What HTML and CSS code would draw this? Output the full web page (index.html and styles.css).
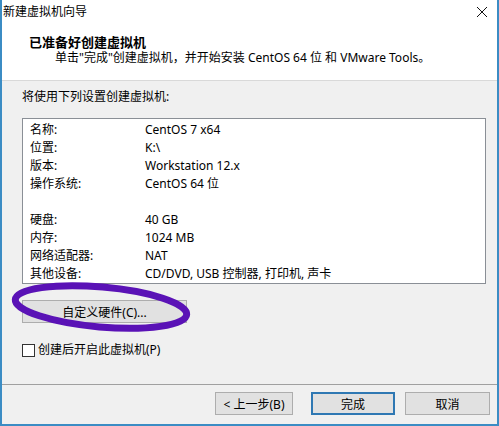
FILE: index.html
```html
<!DOCTYPE html>
<html lang="zh-CN">
<head>
    <meta charset="UTF-8">
    <title>新建虚拟机向导</title>
    <link rel="stylesheet" href="styles.css">
</head>
<body>
    <div class="window">
        <div class="titlebar">
            <span class="title">新建虚拟机向导</span>
            <svg class="close" width="12" height="12" viewBox="0 0 12 12">
                <path d="M1 1 L11 11 M11 1 L1 11" stroke="#111" stroke-width="1" fill="none"/>
            </svg>
        </div>
        <div class="header">
            <div class="heading">已准备好创建虚拟机</div>
            <div class="subtitle">单击"完成"创建虚拟机，并开始安装 CentOS 64 位 和 VMware Tools。</div>
        </div>

        <div class="content">
            <div class="intro">将使用下列设置创建虚拟机:</div>
            <div class="summary">
                <div class="row"><span class="key">名称:</span><span>CentOS 7 x64</span></div>
                <div class="row"><span class="key">位置:</span><span>K:\</span></div>
                <div class="row"><span class="key">版本:</span><span>Workstation 12.x</span></div>
                <div class="row"><span class="key">操作系统:</span><span>CentOS 64 位</span></div>
                <div class="row"></div>
                <div class="row"><span class="key">硬盘:</span><span>40 GB</span></div>
                <div class="row"><span class="key">内存:</span><span>1024 MB</span></div>
                <div class="row"><span class="key">网络适配器:</span><span>NAT</span></div>
                <div class="row"><span class="key">其他设备:</span><span>CD/DVD, USB 控制器, 打印机, 声卡</span></div>
            </div>
            <button class="btn custom">自定义硬件(C)...</button>
            <label class="check">
                <span class="box"></span>
                <span>创建后开启此虚拟机(P)</span>
            </label>
        </div>

        <div class="footer">
            <button class="btn back">&lt; 上一步(B)</button>
            <button class="btn finish">完成</button>
            <button class="btn cancel">取消</button>
        </div>

        <!-- 手绘的紫色圈 -->
        <svg class="mark" width="499" height="426" viewBox="0 0 499 426">
            <ellipse cx="101" cy="307" rx="86" ry="20" transform="rotate(5 101 307)"
                     fill="none" stroke="#5a12b6" stroke-width="7"/>
        </svg>
    </div>
</body>
</html>
```

FILE: styles.css
```css
* {
    margin: 0;
    padding: 0;
    box-sizing: border-box;
}

body {
    width: 499px;
    height: 426px;
    overflow: hidden;
    font-family: "Noto Sans", "Noto Sans CJK SC", sans-serif;
    font-size: 12px;
    color: #000;
    background: #f0f0f0;
}

.window {
    position: relative;
    width: 499px;
    height: 426px;
    background: #f0f0f0;
    border-left: 2px solid #3b8cc4;
    border-right: 2px solid #3b8cc4;
    border-bottom: 2px solid #3b8cc4;
    display: flex;
    flex-direction: column;
}

.titlebar {
    height: 24px;
    background: #fff;
    display: flex;
    align-items: center;
    justify-content: space-between;
    padding: 0 9px 0 1px;
}

.title {
    font-size: 12px;
    line-height: 16px;
}

.header {
    height: 57px;
    background: #fff;
    border-bottom: 1px solid #d9d9d9;
    padding: 10px 0 0 27px;
}

.heading {
    font-size: 13px;
    font-weight: bold;
    line-height: 16px;
}

.subtitle {
    line-height: 16px;
    padding-left: 26px;
}

.content {
    padding: 8px 11px 0 20px;
    display: flex;
    flex-direction: column;
    align-items: flex-start;
}

.intro {
    line-height: 16px;
}

.summary {
    margin-top: 13px;
    width: 464px;
    height: 166px;
    background: #fff;
    border: 1px solid #8a8f96;
    padding: 2px 0 0 7px;
}

.row {
    display: flex;
    height: 18px;
    line-height: 18px;
}

.key {
    width: 115px;
}

.btn {
    font-family: "Noto Sans", "Noto Sans CJK SC", sans-serif;
    font-size: 12px;
    height: 23px;
    background: #e1e1e1;
    border: 1px solid #adadad;
    color: #000;
}

.custom {
    margin-top: 16px;
    width: 165px;
}

.check {
    margin-top: 19px;
    display: flex;
    align-items: center;
    gap: 3px;
    line-height: 16px;
}

.box {
    width: 13px;
    height: 13px;
    background: #fff;
    border: 1px solid #333;
}

.footer {
    margin-top: auto;
    height: 40px;
    border-top: 1px solid #a0a0a0;
    display: flex;
    padding: 7px 7px 0 0;
    justify-content: flex-end;
}

.back {
    width: 78px;
    margin-right: 18px;
}

.finish {
    width: 84px;
    margin-right: 10px;
    border: 2px solid #2f78b3;
}

.cancel {
    width: 85px;
}

.mark {
    position: absolute;
    left: -2px;
    top: 0;
    pointer-events: none;
}
```
